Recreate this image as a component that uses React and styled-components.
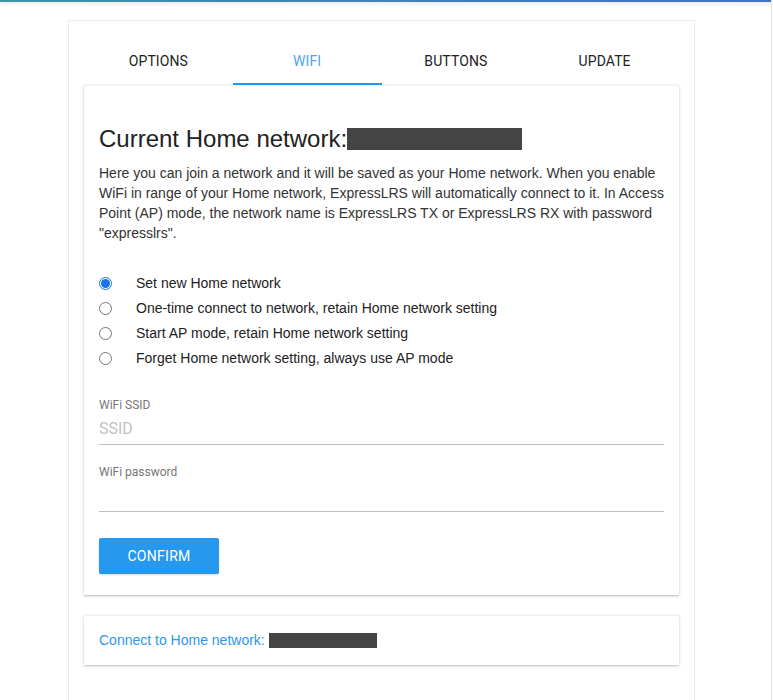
import React, { useState } from "react";
import styled, { createGlobalStyle } from "styled-components";

const GlobalStyle = createGlobalStyle`
  html, body {
    margin: 0;
    padding: 0;
    background: #fff;
    font-family: "Liberation Sans", Arial, sans-serif;
    color: #222;
  }
  * { box-sizing: border-box; }
`;

const Page = styled.div`
  min-height: 700px;
  border-right: 1px solid #e6e6e6;
  width: 772px;
`;

const TopBar = styled.div`
  height: 2px;
  background: linear-gradient(90deg, #3f93a2, #4270c6);
  box-shadow: 0 1px 4px rgba(0, 0, 0, 0.18);
`;

const Container = styled.div`
  margin: 18px 0 0 68px;
  width: 627px;
  min-height: 690px;
  border: 1px solid #ececec;
  border-bottom: none;
  padding: 0 15px;
`;

const Tabs = styled.div`
  display: grid;
  grid-template-columns: repeat(4, 1fr);
  margin-top: 14px;
`;

const Tab = styled.div`
  height: 50px;
  padding-top: 3px;
  display: flex;
  align-items: center;
  justify-content: center;
  font-family: Roboto, "Liberation Sans", sans-serif;
  font-size: 14px;
  letter-spacing: 0.1px;
  color: ${(p) => (p.$active ? "#4fa5ee" : "#222")};
  border-bottom: 2px solid ${(p) => (p.$active ? "#2196f3" : "transparent")};
`;

const Card = styled.div`
  background: #fff;
  padding: ${(p) => p.$pad || "15px 15px 21px"};
  box-shadow: 0 1px 3px rgba(0, 0, 0, 0.2), 0 1px 1px rgba(0, 0, 0, 0.08);
  border-top: 1px solid #f2f2f2;
  margin-bottom: 20px;
`;

const Heading = styled.h2`
  margin: 24px 0 0;
  font-size: 24px;
  font-weight: normal;
  color: #222;
  display: flex;
  align-items: center;
  line-height: 28px;
`;

const Redacted = styled.span`
  display: inline-block;
  background: #444;
  width: ${(p) => p.$w}px;
  height: ${(p) => p.$h}px;
  margin-left: ${(p) => p.$ml || 0}px;
  vertical-align: middle;
`;

const Para = styled.p`
  margin: 10px 0 0;
  font-size: 14px;
  line-height: 20px;
  color: #333;
`;

const Options = styled.div`
  margin-top: 30px;
  display: flex;
  flex-direction: column;
  gap: 5px;
`;

const OptionRow = styled.label`
  display: flex;
  align-items: center;
  height: 20px;
  font-size: 14px;
  color: #222;
`;

const Radio = styled.span`
  width: 13px;
  height: 13px;
  border-radius: 50%;
  margin: 0 24px 0 0;
  border: 1px solid ${(p) => (p.$checked ? "#1a73e8" : "#767676")};
  display: flex;
  align-items: center;
  justify-content: center;
  &::after {
    content: "";
    width: 9px;
    height: 9px;
    border-radius: 50%;
    background: ${(p) => (p.$checked ? "#1a73e8" : "transparent")};
  }
`;

const Field = styled.div`
  margin-top: ${(p) => p.$mt}px;
`;

const FieldLabel = styled.div`
  font-family: Roboto, "Liberation Sans", sans-serif;
  font-size: 12px;
  color: #777;
  line-height: 14px;
`;

const Input = styled.input`
  display: block;
  width: 100%;
  border: none;
  border-bottom: 1px solid #bdbdbd;
  outline: none;
  font-family: Roboto, "Liberation Sans", sans-serif;
  font-size: 16px;
  height: 29px;
  padding: 2px 0 5px;
  margin-top: 4px;
  background: transparent;
  &::placeholder { color: #c2c2c2; }
`;

const Button = styled.button`
  margin-top: 26px;
  width: 120px;
  height: 36px;
  border: none;
  border-radius: 2px;
  background: #2699ef;
  color: #fff;
  font-family: Roboto, "Liberation Sans", sans-serif;
  font-size: 14px;
  letter-spacing: 0.3px;
  box-shadow: 0 1px 2px rgba(0, 0, 0, 0.15);
`;

const LinkRow = styled.div`
  display: flex;
  align-items: center;
  font-size: 14px;
  color: #2f96ef;
`;

const options = [
  "Set new Home network",
  "One-time connect to network, retain Home network setting",
  "Start AP mode, retain Home network setting",
  "Forget Home network setting, always use AP mode",
];

export default function App() {
  const [sel] = useState(0);
  return (
    <Page>
      <GlobalStyle />
      <TopBar />
      <Container>
        <Tabs>
          <Tab>OPTIONS</Tab>
          <Tab $active>WIFI</Tab>
          <Tab>BUTTONS</Tab>
          <Tab>UPDATE</Tab>
        </Tabs>
        <Card>
          <Heading>
            Current Home network:
            <Redacted $w={175} $h={22} />
          </Heading>
          <Para>
            Here you can join a network and it will be saved as your Home network. When you enable
            WiFi in range of your Home network, ExpressLRS will automatically connect to it. In Access
            Point (AP) mode, the network name is ExpressLRS TX or ExpressLRS RX with password
            "expresslrs".
          </Para>
          <Options>
            {options.map((o, i) => (
              <OptionRow key={o}>
                <Radio $checked={i === sel} />
                {o}
              </OptionRow>
            ))}
          </Options>
          <Field $mt={30}>
            <FieldLabel>WiFi SSID</FieldLabel>
            <Input placeholder="SSID" />
          </Field>
          <Field $mt={20}>
            <FieldLabel>WiFi password</FieldLabel>
            <Input type="password" />
          </Field>
          <Button>CONFIRM</Button>
        </Card>
        <Card $pad="16px 15px 17px">
          <LinkRow>
            Connect to Home network:
            <Redacted $w={108} $h={15} $ml={4} />
          </LinkRow>
        </Card>
      </Container>
    </Page>
  );
}
